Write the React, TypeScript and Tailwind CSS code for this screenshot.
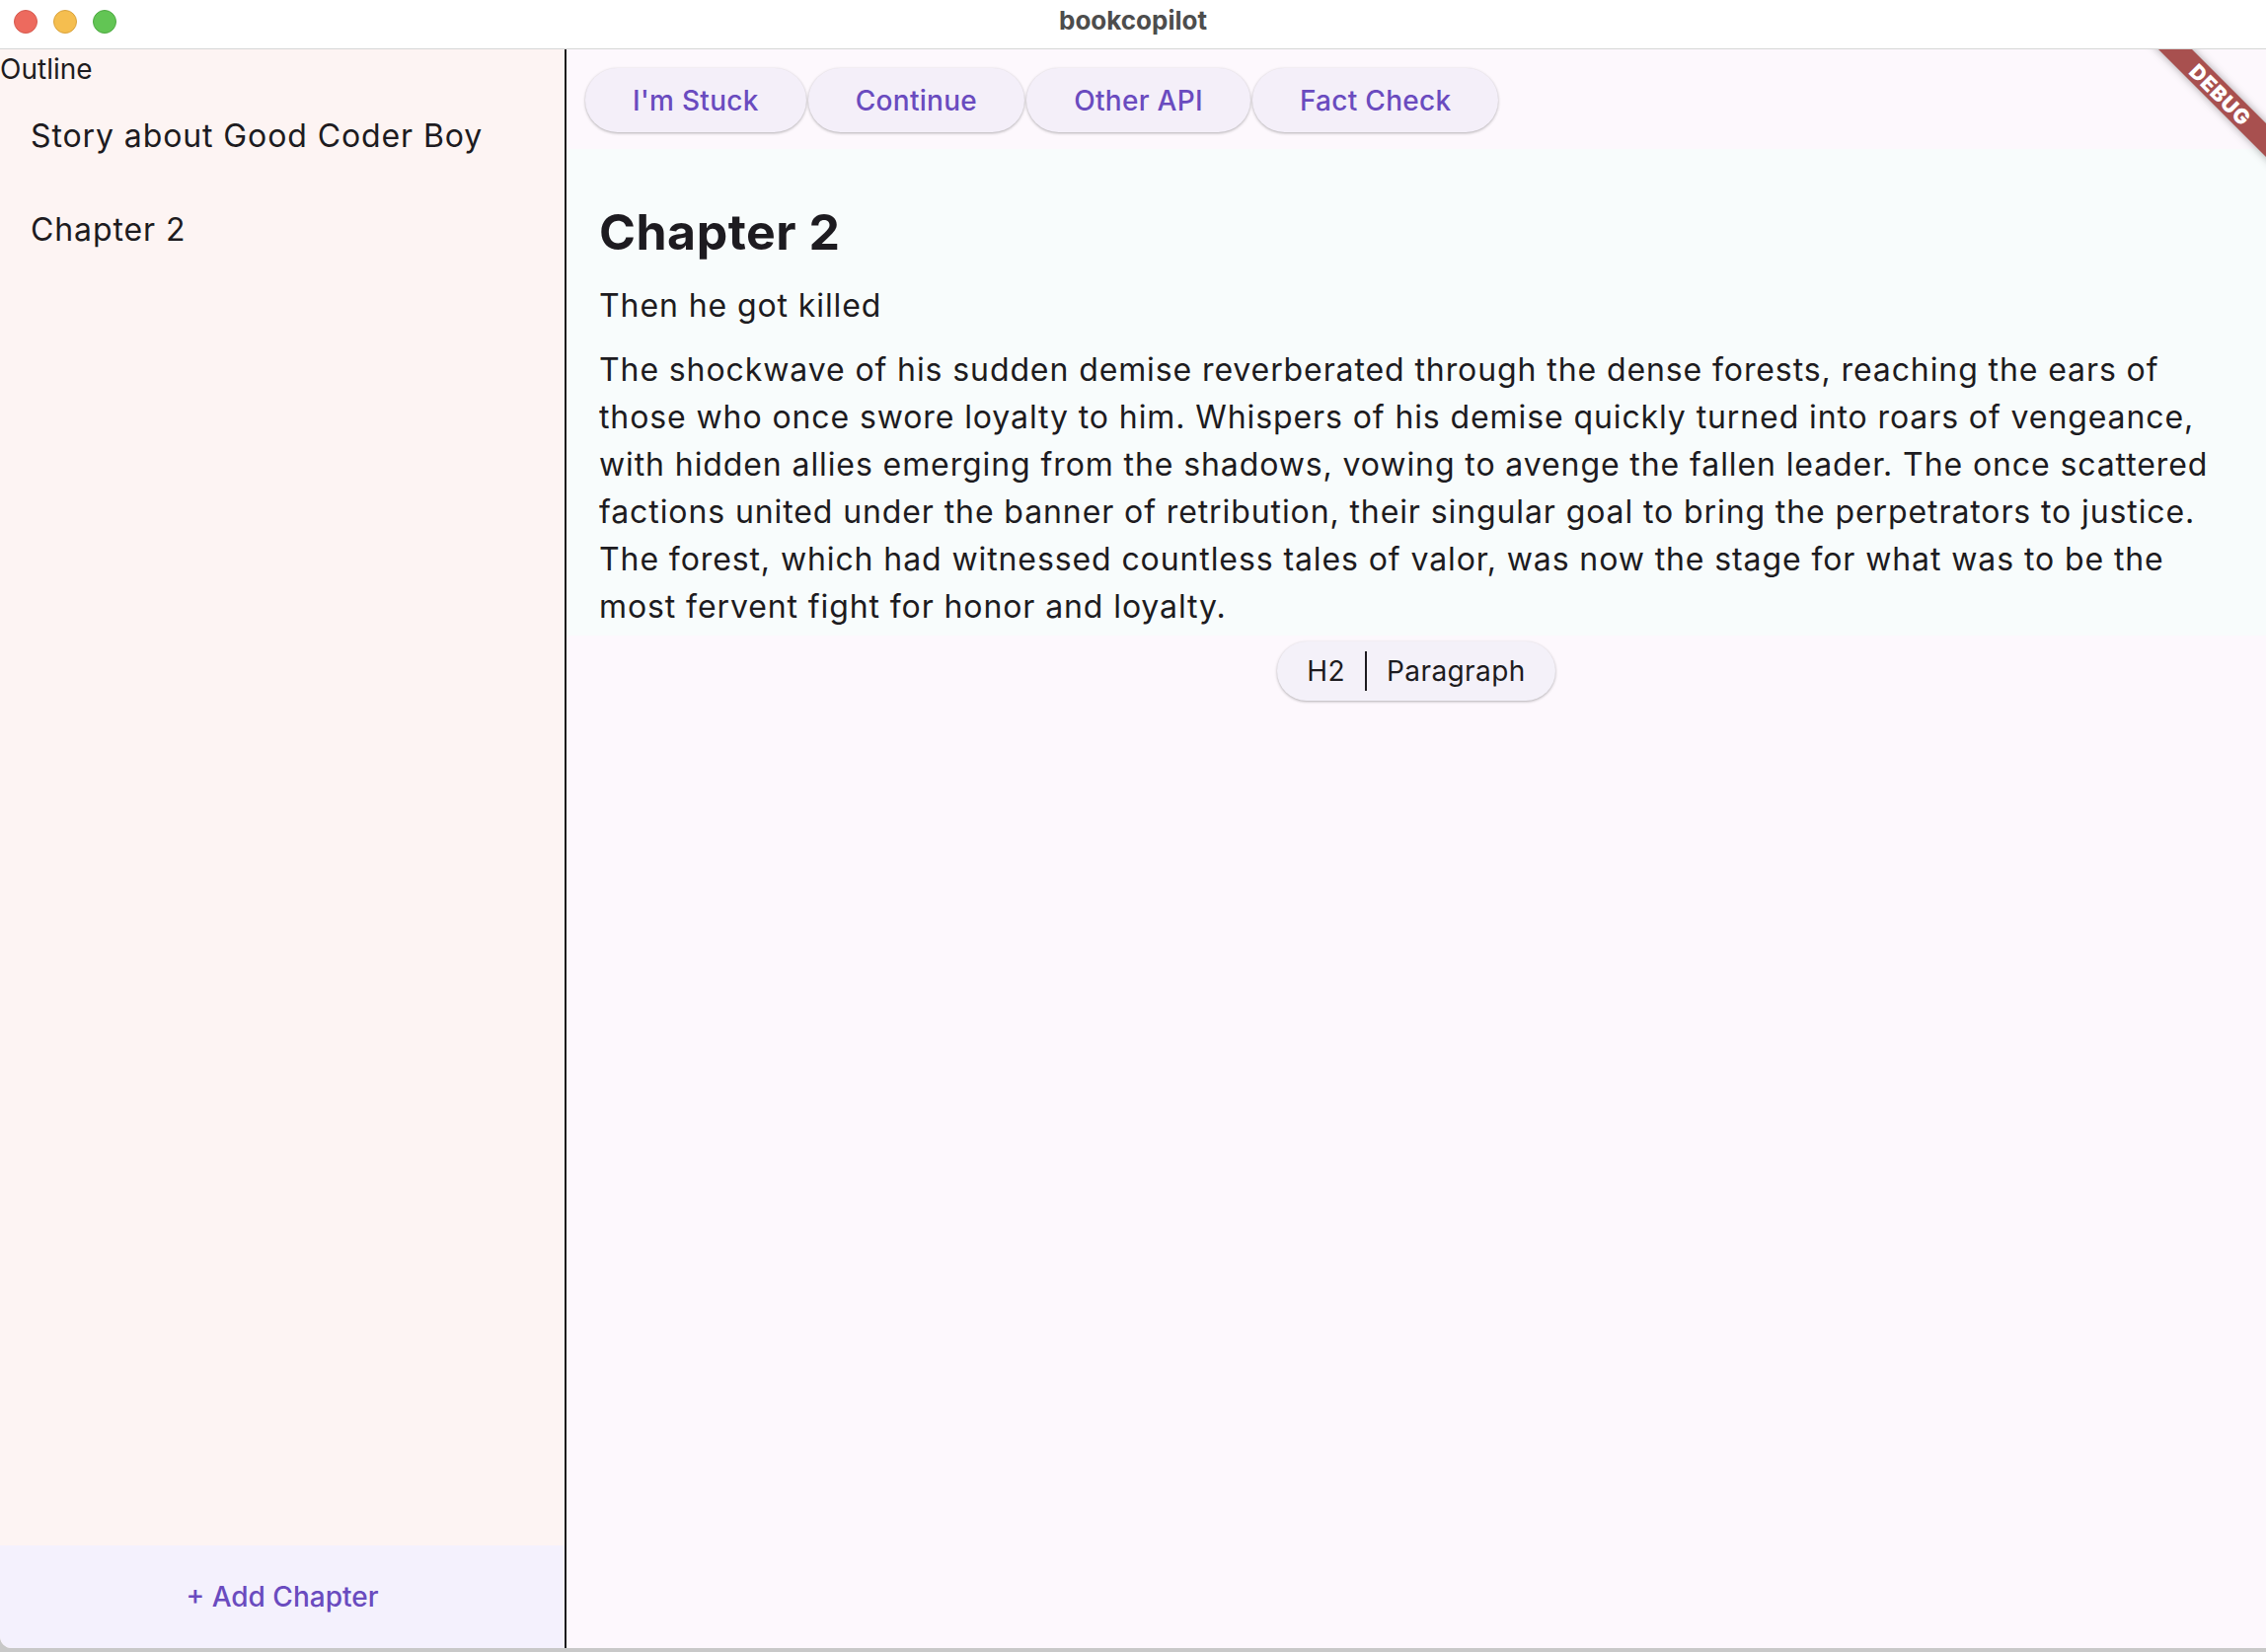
import React from 'react';

const actions = ["I'm Stuck", 'Continue', 'Other API', 'Fact Check'];

const paragraphLines = [
  'The shockwave of his sudden demise reverberated through the dense forests, reaching the ears of',
  'those who once swore loyalty to him. Whispers of his demise quickly turned into roars of vengeance,',
  'with hidden allies emerging from the shadows, vowing to avenge the fallen leader. The once scattered',
  'factions united under the banner of retribution, their singular goal to bring the perpetrators to justice.',
  'The forest, which had witnessed countless tales of valor, was now the stage for what was to be the',
  'most fervent fight for honor and loyalty.',
];

const TitleBar: React.FC = () => (
  <div className="relative h-[50px] shrink-0 bg-white border-b border-[#d6d6d6] flex items-center justify-center pb-[8px]">
    <div className="absolute left-[14px] top-[10px] flex gap-[16px]">
      <span className="w-[24px] h-[24px] rounded-full bg-[#ed6a5e] border border-[#d65a4f]" />
      <span className="w-[24px] h-[24px] rounded-full bg-[#f5be4f] border border-[#d9a33e]" />
      <span className="w-[24px] h-[24px] rounded-full bg-[#62c554] border border-[#4ea943]" />
    </div>
    <span className="text-[26px] font-bold text-[#4d4d4d] leading-none">bookcopilot</span>
  </div>
);

const Sidebar: React.FC = () => (
  <aside className="w-[574px] shrink-0 bg-[#fdf4f3] border-r-2 border-[#1c1c1c] flex flex-col rounded-bl-[12px]">
    <div className="text-[28px] leading-[40px] text-[#1d1b20]">Outline</div>
    <div className="flex flex-col">
      {['Story about Good Coder Boy', 'Chapter 2'].map((item) => (
        <div key={item} className="h-[95px] flex items-center pl-[31px] text-[32px] tracking-[0.9px] text-[#1d1b20]">
          {item}
        </div>
      ))}
    </div>
    <div className="flex-1" />
    <button className="h-[104px] bg-[#f4f1fd] flex items-center justify-center text-[28px] font-medium text-[#6a4bbf] rounded-bl-[12px]">
      + Add Chapter
    </button>
  </aside>
);

const DebugBanner: React.FC = () => (
  <div className="absolute top-0 right-0 w-[150px] h-[150px] overflow-hidden pointer-events-none">
    <div className="absolute left-[4px] top-[34px] w-[200px] h-[24px] rotate-45 bg-[#a8504f] shadow-[0_0_8px_rgba(0,0,0,0.35)] flex items-center justify-center">
      <span className="text-[21px] font-black text-white tracking-[1px] leading-none">DEBUG</span>
    </div>
  </div>
);

const Editor: React.FC = () => (
  <main className="relative flex-1 bg-[#fdf8fd] flex flex-col">
    <DebugBanner />
    <div className="flex gap-[2px] pl-[19px] pt-[19px]">
      {actions.map((label) => (
        <button
          key={label}
          className="h-[65px] px-[48px] rounded-full bg-[#f4eff9] text-[#6a4bbf] text-[28px] font-medium tracking-[0.3px] shadow-[0_1px_3px_rgba(0,0,0,0.3)]"
        >
          {label}
        </button>
      ))}
    </div>
    <div className="mt-[17px] bg-[#f8fcfc] pl-[33px] pr-[33px] pt-[54px] pb-[5px] text-[#1d1b20]">
      <h2 className="text-[50px] leading-[60px] font-bold tracking-[0.5px]">Chapter 2</h2>
      <p className="mt-[21px] text-[32px] leading-[48px] tracking-[0.9px]">Then he got killed</p>
      <p className="mt-[17px] text-[32px] leading-[48px] tracking-[0.9px]">
        {paragraphLines.map((line) => (
          <span key={line} className="block whitespace-nowrap">
            {line}
          </span>
        ))}
      </p>
    </div>
    <div className="flex justify-center mt-[6px]">
      <div className="h-[60px] px-[30px] rounded-full bg-[#f4f1f9] shadow-[0_1px_3px_rgba(0,0,0,0.3)] flex items-center text-[28px] tracking-[0.4px] text-[#1d1b20]">
        <span>H2</span>
        <span className="mx-[20px] w-[2px] h-[40px] bg-[#1d1b20]" />
        <span>Paragraph</span>
      </div>
    </div>
  </main>
);

export default function App() {
  return (
    <div className="w-[2296px] h-[1674px] flex flex-col bg-[#c8c8c8] font-['Inter','Noto_Sans',sans-serif] overflow-hidden">
      <TitleBar />
      <div className="flex flex-1 mb-[4px]">
        <Sidebar />
        <Editor />
      </div>
    </div>
  );
}
